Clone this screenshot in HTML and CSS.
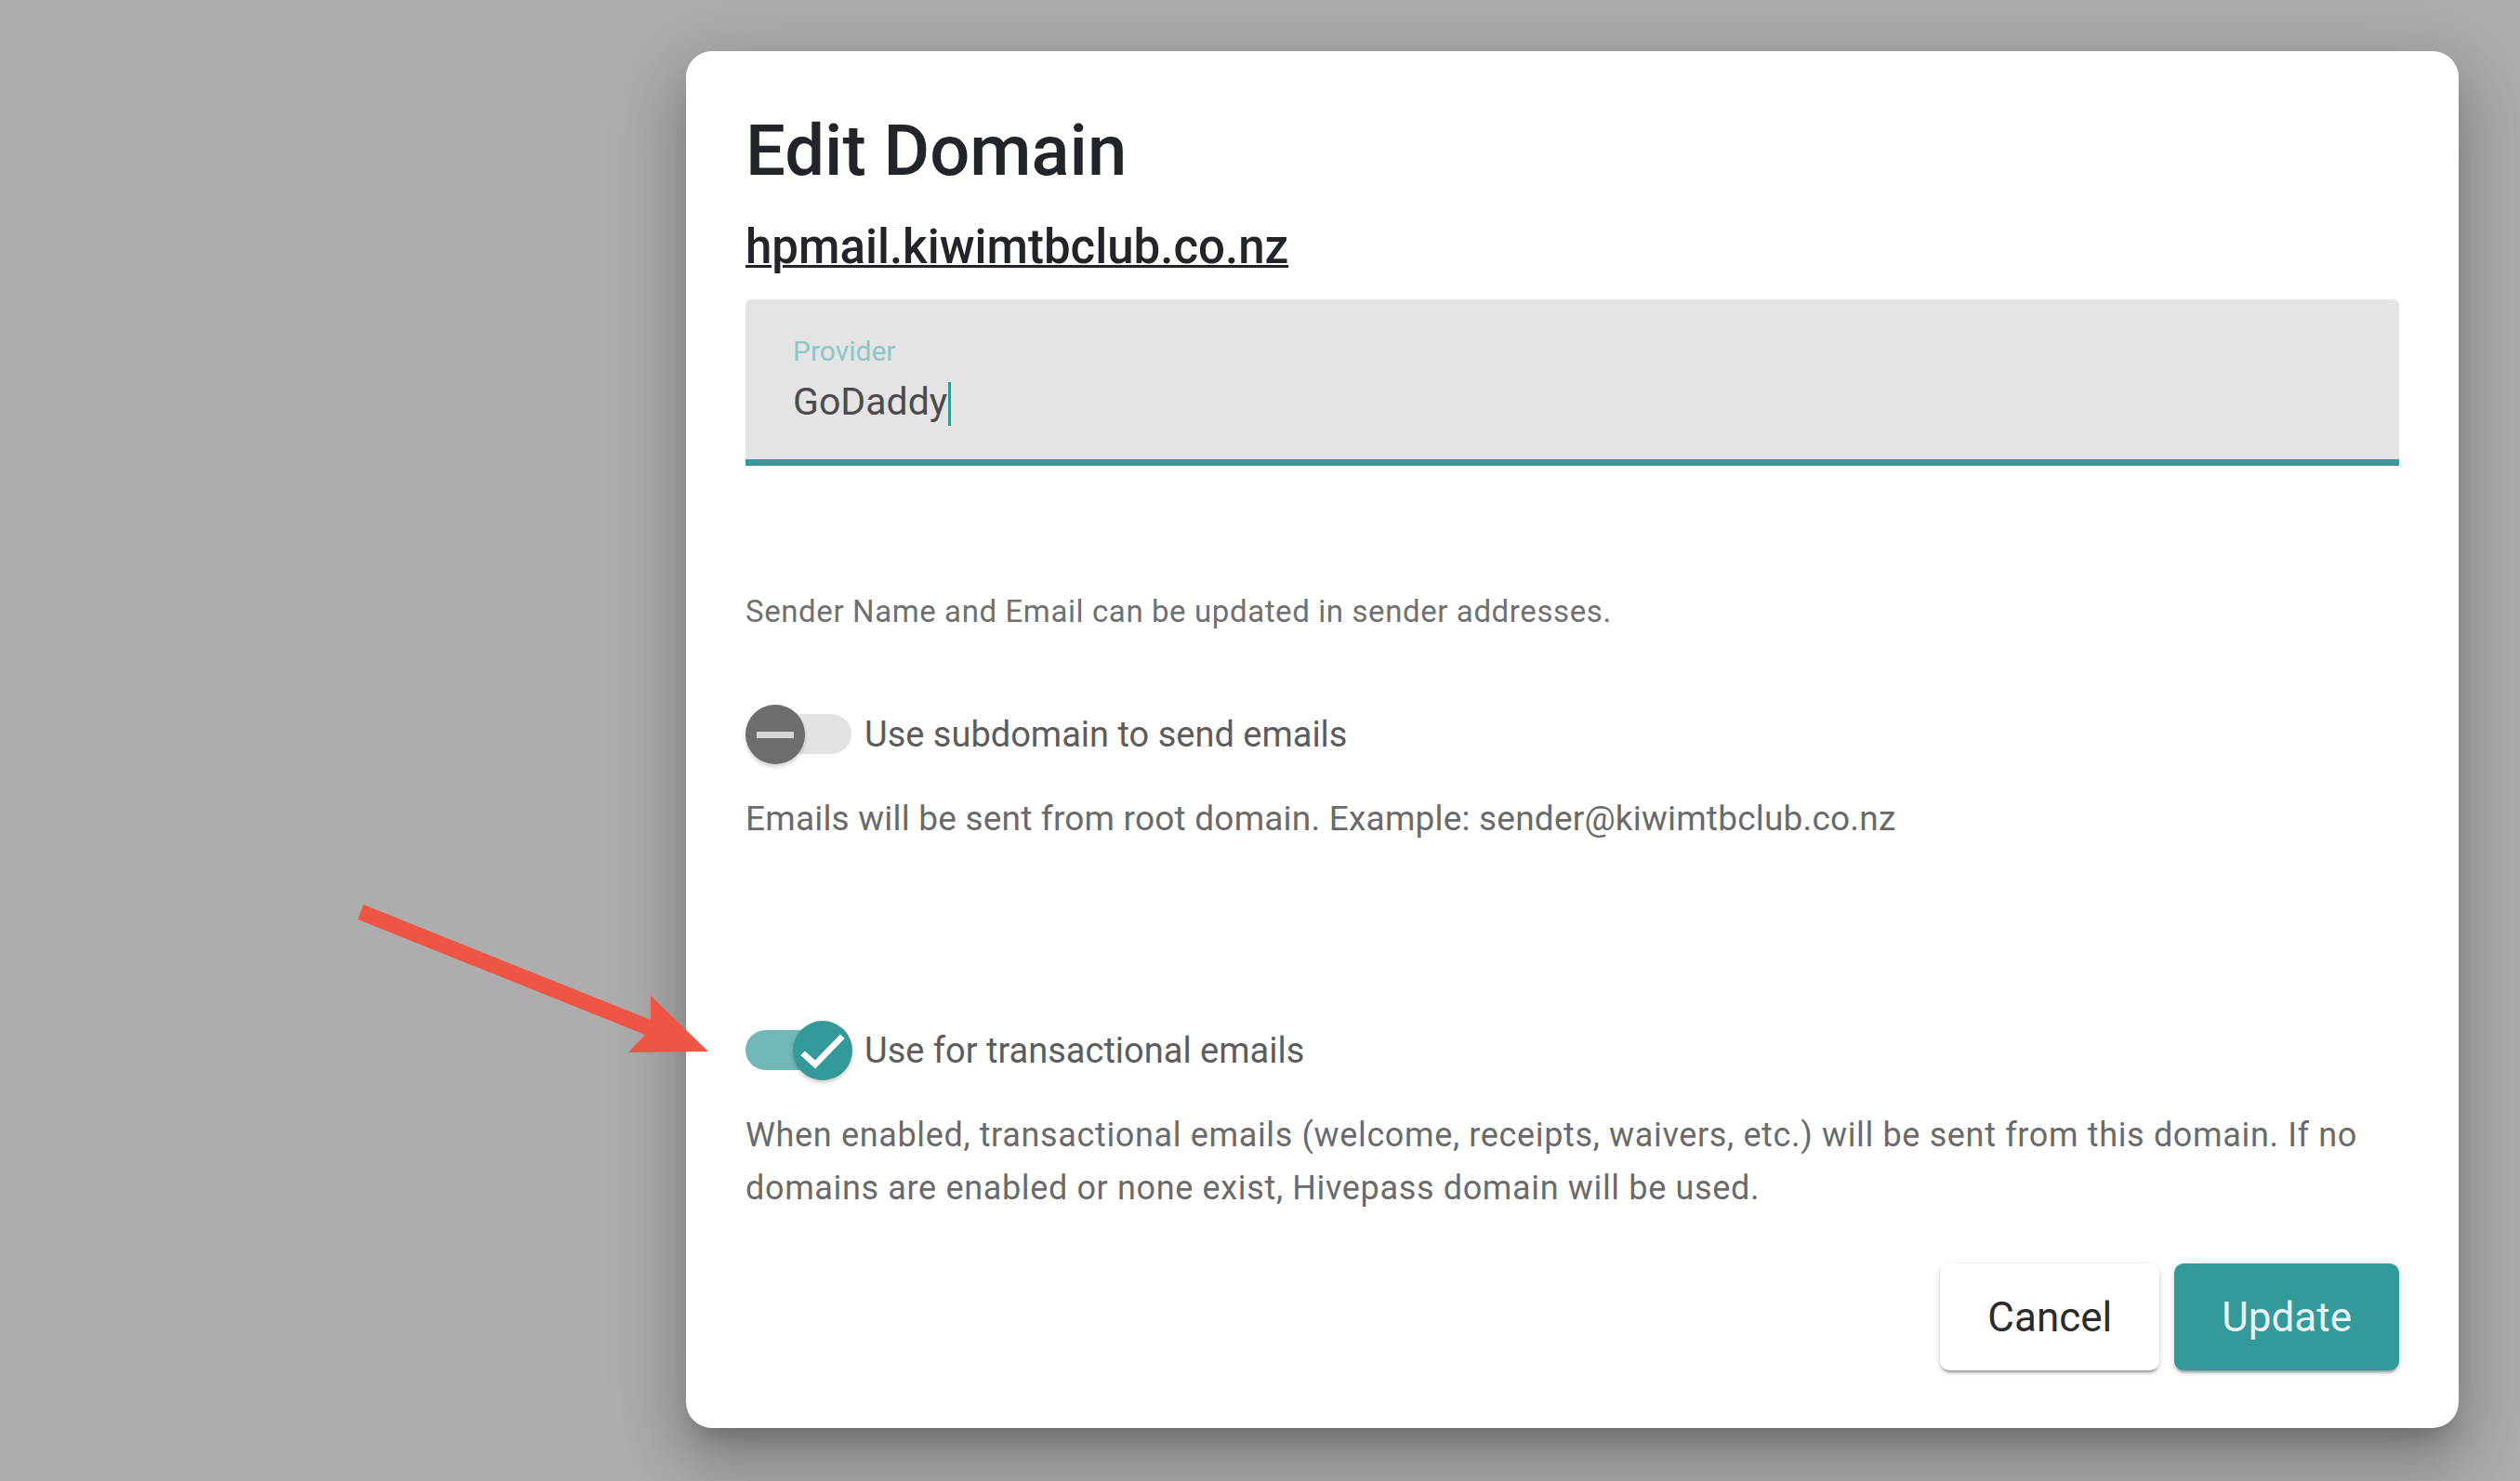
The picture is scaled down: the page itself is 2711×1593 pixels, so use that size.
FILE: index.html
```html
<!DOCTYPE html>
<html lang="en">
<head>
  <meta charset="UTF-8">
  <title>Edit Domain</title>
  <link rel="stylesheet" href="styles.css">
</head>
<body>
  <div class="dialog">
    <h2 class="dialog-title">Edit Domain</h2>
    <a href="#" class="domain-link">hpmail.kiwimtbclub.co.nz</a>

    <!-- Provider field -->
    <div class="field">
      <label class="field-label">Provider</label>
      <div class="field-input">GoDaddy<span class="caret"></span></div>
    </div>

    <p class="hint">Sender Name and Email can be updated in sender addresses.</p>

    <div class="switch-row">
      <span class="switch">
        <span class="switch-track"></span>
        <span class="switch-knob"><span class="minus"></span></span>
      </span>
      <span class="switch-label">Use subdomain to send emails</span>
    </div>
    <p class="desc desc-root">Emails will be sent from root domain. Example: sender@kiwimtbclub.co.nz</p>

    <div class="switch-row switch-row-on">
      <span class="switch on">
        <span class="switch-track"></span>
        <span class="switch-knob">
          <svg viewBox="0 0 64 64" width="64" height="64"><path d="M13 37 L24 47 L51 19" fill="none" stroke="#fff" stroke-width="6.5" stroke-linecap="square"/></svg>
        </span>
      </span>
      <span class="switch-label">Use for transactional emails</span>
    </div>
    <p class="desc desc-long">When enabled, transactional emails (welcome, receipts, waivers, etc.) will be sent from this domain. If no domains are enabled or none exist, Hivepass domain will be used.</p>

    <!-- Actions -->
    <div class="actions">
      <button class="btn btn-cancel">Cancel</button>
      <button class="btn btn-update">Update</button>
    </div>
  </div>

  <!-- Annotation arrow -->
  <svg class="arrow" width="800" height="1200" viewBox="0 0 800 1200">
    <polygon points="391,973 700,1097 700,1071 762,1131 676,1132 694,1113 385,989" fill="#ef5545"/>
  </svg>
</body>
</html>
```

FILE: styles.css
```css
/* Page */
body {
  margin: 0;
  padding: 55px 0 0 738px;
  background-color: #adadad;
  font-family: Roboto, "Liberation Sans", sans-serif;
  min-height: 100vh;
  box-sizing: border-box;
}

.dialog {
  width: 1907px;
  box-sizing: border-box;
  padding: 61px 64px 62px;
  background: #ffffff;
  border-radius: 28px;
  box-shadow: 0 19px 26px -12px rgba(0, 0, 0, 0.22), 0 41px 66px 5px rgba(0, 0, 0, 0.15), 0 16px 80px 14px rgba(0, 0, 0, 0.13);
}

.dialog-title {
  margin: 0;
  font-size: 76px;
  line-height: 92px;
  font-weight: 500;
  color: #212529;
}

.domain-link {
  display: block;
  margin-top: 30px;
  font-size: 51px;
  line-height: 56px;
  font-weight: 500;
  color: #212529;
  text-decoration: underline;
  text-decoration-thickness: 3px;
  width: max-content;
}

/* Filled text field */
.field {
  margin-top: 28px;
  background: #e4e4e4;
  border-radius: 6px 6px 0 0;
  border-bottom: 7px solid #339a99;
  padding: 38px 51px 36px;
}
.field-label {
  display: block;
  font-size: 30px;
  line-height: 36px;
  color: #8ec6c5;
}
.field-input {
  margin-top: 11px;
  font-size: 41px;
  line-height: 50px;
  color: #4b4b4b;
}
.caret {
  display: inline-block;
  width: 3px;
  height: 47px;
  margin-left: 1px;
  background: #339a99;
  vertical-align: -12px;
}

.hint {
  margin: 137px 0 0;
  font-size: 33px;
  line-height: 40px;
  letter-spacing: 0.6px;
  color: #707070;
}

/* Switches */
.switch-row {
  display: flex;
  align-items: center;
  height: 66px;
  margin-top: 79px;
}
.switch-row-on {
  margin-top: 194px;
}
.switch {
  position: relative;
  width: 114px;
  height: 66px;
  flex-shrink: 0;
}
.switch-track {
  position: absolute;
  left: 0;
  top: 11px;
  width: 114px;
  height: 43px;
  border-radius: 22px;
  background: #e2e2e2;
}
.switch-knob {
  position: absolute;
  left: 0;
  top: 1px;
  width: 64px;
  height: 64px;
  border-radius: 50%;
  background: #6d6d6d;
  box-shadow: 0 3px 4px rgba(0, 0, 0, 0.18);
  display: flex;
  align-items: center;
  justify-content: center;
}
.minus {
  width: 40px;
  height: 7px;
  background: #d6d6d6;
}
.switch.on .switch-track {
  background: #72b8b8;
}
.switch.on .switch-knob {
  left: 51px;
  background: #339a99;
}
.switch-label {
  margin-left: 14px;
  font-size: 38px;
  line-height: 46px;
  color: #5c5c5c;
}

.desc {
  margin: 36px 0 0;
  font-size: 37px;
  line-height: 44px;
  letter-spacing: 0.2px;
  color: #6a6a6a;
}
.desc-long {
  margin-top: 30px;
  font-size: 36px;
  line-height: 57px;
  letter-spacing: 0.65px;
}

/* Buttons */
.actions {
  display: flex;
  justify-content: flex-end;
  gap: 16px;
  margin-top: 52px;
}
.btn {
  height: 115px;
  padding: 0 51px;
  border: none;
  border-radius: 10px;
  font-family: Roboto, "Liberation Sans", sans-serif;
  font-size: 44px;
  cursor: pointer;
  box-shadow: 0 5px 2px -3px rgba(0, 0, 0, 0.2), 0 3px 3px rgba(0, 0, 0, 0.14), 0 2px 9px rgba(0, 0, 0, 0.12);
}
.btn-cancel {
  background: #ffffff;
  color: #2b2b2b;
}
.btn-update {
  background: #339a99;
  color: #e6f4f4;
}

/* Arrow overlay */
.arrow {
  position: absolute;
  left: 0;
  top: 0;
  pointer-events: none;
}
```
